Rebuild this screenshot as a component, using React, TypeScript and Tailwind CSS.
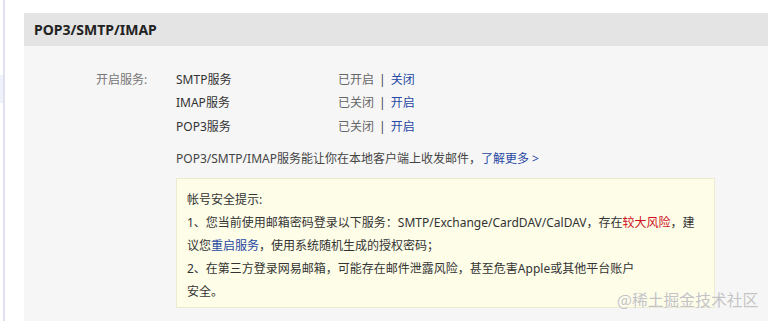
import React from "react";

const FONT = { fontFamily: '"Noto Sans", "Noto Sans CJK SC", sans-serif' };

function ServiceRow({ name, status, action }: { name: string; status: string; action: string }) {
  return (
    <div className="flex h-[23.5px] items-center">
      <div className="w-[162px] text-[#333]">{name}</div>
      <div className="text-[#666]">
        {status}
        <span className="mx-[5px] text-[#444]">|</span>
        <span className="text-[#2748a3]">{action}</span>
      </div>
    </div>
  );
}

export default function App() {
  return (
    <div className="relative flex h-[321px] w-full overflow-hidden bg-white text-[12px]" style={FONT}>
      <div className="relative w-[24px] shrink-0">
        <div className="absolute left-0 top-[75px] h-[28px] w-[3px] bg-[#eef3fb]" />
        <div className="ml-[3px] h-full w-[2px] bg-[#e0e0ef]" />
      </div>
      <div className="flex flex-1 flex-col pt-[13px]">
        <div className="flex h-[33px] items-center bg-[#e4e4e4] pl-[10px] text-[14px] font-bold text-[#222]">
          POP3/SMTP/IMAP
        </div>
        <div className="flex-1 bg-[#f6f6f6] pt-[22px]">
          <div className="flex">
            <div className="ml-[72px] w-[80px] leading-[23.5px] text-[#777]">开启服务:</div>
            <div className="flex flex-col">
              <ServiceRow name="SMTP服务" status="已开启" action="关闭" />
              <ServiceRow name="IMAP服务" status="已关闭" action="开启" />
              <ServiceRow name="POP3服务" status="已关闭" action="开启" />
              <div className="mt-[8px] leading-[23px] text-[#444]">
                POP3/SMTP/IMAP服务能让你在本地客户端上收发邮件，
                <span className="text-[#2748a3]">了解更多 &gt;</span>
              </div>
              <div className="mt-[8px] w-[539px] border border-[#ecebcf] bg-[#fdfde8] pb-[4px] pl-[10px] pt-[9px] leading-[23px] text-[#333]">
                <div className="whitespace-nowrap">帐号安全提示:</div>
                <div className="whitespace-nowrap">
                  1、您当前使用邮箱密码登录以下服务：SMTP/Exchange/CardDAV/CalDAV，存在
                  <span className="text-[#d0121e]">较大风险</span>，建
                </div>
                <div className="whitespace-nowrap">
                  议您<span className="text-[#2748a3]">重启服务</span>，使用系统随机生成的授权密码；
                </div>
                <div className="whitespace-nowrap">2、在第三方登录网易邮箱，可能存在邮件泄露风险，甚至危害Apple或其他平台账户</div>
                <div className="whitespace-nowrap">安全。</div>
              </div>
            </div>
          </div>
        </div>
      </div>
      <div
        className="absolute left-[617px] top-[289px] whitespace-nowrap text-[15.8px] leading-[21px] text-[#c4c4c4]"
        style={{ fontFamily: '"Noto Sans CJK SC", sans-serif', textShadow: "0 0 1px #fff" }}
      >
        @稀土掘金技术社区
      </div>
    </div>
  );
}
